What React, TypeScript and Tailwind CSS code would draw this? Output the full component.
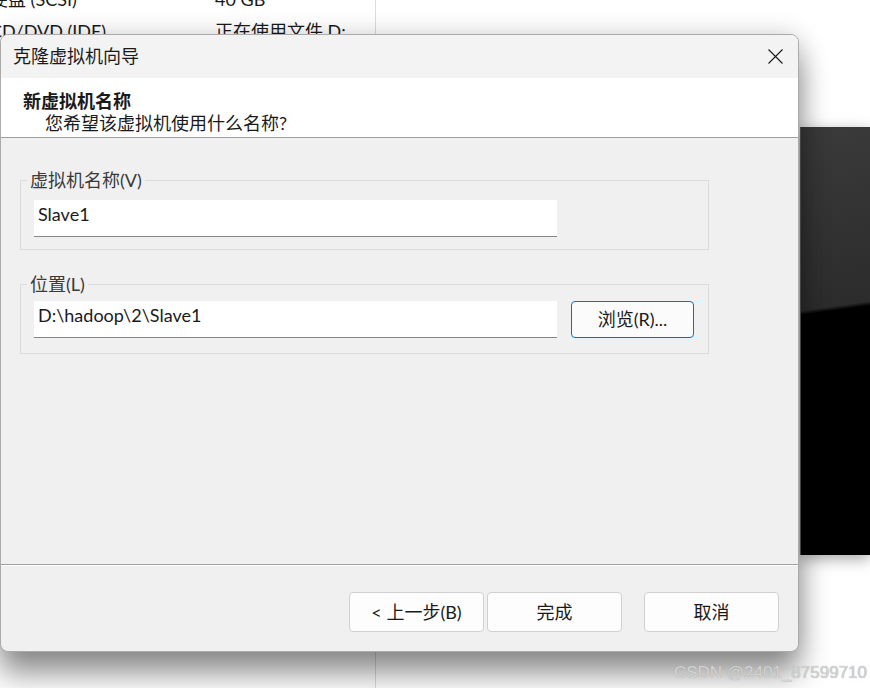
import type { ReactNode } from 'react'

// rows of the VM settings list behind the wizard
const DEVICES = [
  { name: '硬盘 (SCSI)', summary: '40 GB' },
  { name: 'CD/DVD (IDE)', summary: '正在使用文件 D:' },
]

function Desktop() {
  return (
    <>
      <div className="absolute left-[375px] top-0 h-full w-px bg-[#dcdcdc]" />
      <div className="absolute left-[-10px] top-[-17px] grid grid-cols-[225px_1fr] leading-[32px] text-[#1a1a1a]">
        {DEVICES.map((d) => (
          <div key={d.name} className="contents">
            <span>{d.name}</span>
            <span>{d.summary}</span>
          </div>
        ))}
      </div>
      {/* VM console window peeking out on the right */}
      <div className="absolute left-[800px] top-[127px] h-[428px] w-[70px] border-l border-[#5a5a5a] bg-[linear-gradient(172deg,#3a3a3a_0%,#2c2c2c_42%,#000_43%,#000_100%)] shadow-[0_4px_14px_rgba(0,0,0,0.35)]" />
    </>
  )
}

function CloseIcon() {
  return (
    <svg width="15" height="15" viewBox="0 0 15 15" fill="none" stroke="#1a1a1a" strokeWidth="1.1">
      <path d="M0.5 0.5 L14.5 14.5 M14.5 0.5 L0.5 14.5" />
    </svg>
  )
}

function FooterButton({ children, className = '' }: { children: ReactNode; className?: string }) {
  return (
    <button className={`h-[40px] w-[135px] rounded-[4px] border border-[#d0d0d0] bg-[#fdfdfd] text-[18px] text-[#1a1a1a] ${className}`}>
      {children}
    </button>
  )
}

function TextField({ value }: { value: string }) {
  return (
    <input
      readOnly
      defaultValue={value}
      className="h-[37px] w-[523px] border-b border-[#868686] bg-white pb-[8px] pl-[4px] text-[18px] text-[#1a1a1a] outline-none"
    />
  )
}

function CloneWizard() {
  return (
    <div className="absolute left-0 top-[34px] flex h-[618px] w-[799px] flex-col overflow-hidden rounded-[8px] border border-[#ababab] bg-[#f0f0f0] shadow-[0_22px_30px_rgba(0,0,0,0.42),0_0_26px_rgba(0,0,0,0.16)]">
      <div className="flex h-[43px] shrink-0 items-center justify-between bg-[#f3f3f3] pl-[12px] pr-[15px]">
        <span className="text-[#1b1b1b]">克隆虚拟机向导</span>
        <CloseIcon />
      </div>

      <div className="h-[60px] shrink-0 border-b border-[#a0a0a0] bg-white pl-[22px] pt-[12px] leading-[22px]">
        <div className="font-bold">新虚拟机名称</div>
        <div className="pl-[22px]">您希望该虚拟机使用什么名称?</div>
      </div>

      <div className="flex-1 pl-[19px] pt-[31px]">
        <fieldset className="w-[689px] border border-[#dcdcdc] px-[13px] pb-[12px]">
          <legend className="ml-[-7px] px-[3px] leading-[22px] text-[#3a3a3a]">虚拟机名称(V)</legend>
          <div className="mt-[9px]">
            <TextField value="Slave1" />
          </div>
        </fieldset>

        <fieldset className="mt-[23px] w-[689px] border border-[#dcdcdc] px-[13px] pb-[15px]">
          <legend className="ml-[-7px] px-[3px] leading-[22px] text-[#3a3a3a]">位置(L)</legend>
          <div className="mt-[6px] flex gap-[14px]">
            <TextField value="D:\hadoop\2\Slave1" />
            <button className="h-[37px] w-[123px] rounded-[4px] border border-[#0072d0] bg-[#fbfbfb] text-[18px] text-[#1a1a1a]">
              浏览(R)...
            </button>
          </div>
        </fieldset>
      </div>

      <div className="h-[87px] shrink-0 border-t border-[#a0a0a0]">
        <div className="flex h-full justify-end border-t border-white pr-[19px] pt-[26px]">
          <FooterButton>&lt; 上一步(B)</FooterButton>
          <FooterButton className="ml-[3px]">完成</FooterButton>
          <FooterButton className="ml-[22px]">取消</FooterButton>
        </div>
      </div>
    </div>
  )
}

export default function App() {
  return (
    <div className="relative h-[688px] w-[870px] overflow-hidden bg-white font-['Lato','Noto_Sans_CJK_SC',sans-serif] text-[18px] text-[#1a1a1a]">
      <Desktop />
      <CloneWizard />
      <div className="absolute bottom-[3px] right-[3px] font-['Liberation_Sans',sans-serif] text-[17px] text-[#d4d4d4] [text-shadow:0_0_1px_#9a9a9a]">
        CSDN @2401_87599710
      </div>
    </div>
  )
}
